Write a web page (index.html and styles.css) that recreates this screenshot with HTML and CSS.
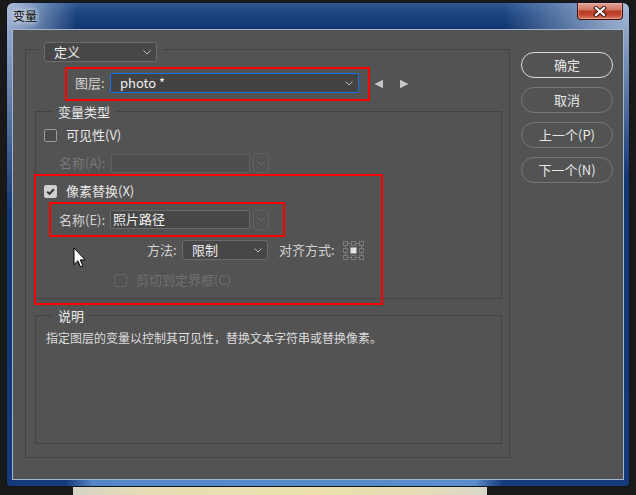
FILE: index.html
```html
<!DOCTYPE html>
<html lang="zh-CN">
<head>
<meta charset="utf-8">
<title>变量</title>
<link rel="stylesheet" href="styles.css">
</head>
<body>
<div class="desktop">
  <div class="window">
    <div class="titlebar">
      <span class="title">变量</span>
      <div class="close">
        <svg width="14" height="11" viewBox="0 0 14 11">
          <path d="M3 2 L11 9 M11 2 L3 9" stroke="#3a1a16" stroke-width="4.2" stroke-linecap="square" fill="none"/>
          <path d="M3 2 L11 9 M11 2 L3 9" stroke="#ffffff" stroke-width="2.2" stroke-linecap="square" fill="none"/>
        </svg>
      </div>
    </div>
    <div class="client">
      <div class="outer-group">
        <div class="legend-select">
          <div class="select sel-def"><span>定义</span>
            <svg class="chev" width="8" height="5" viewBox="0 0 8 5"><polyline points="0.5,0.5 4,4 7.5,0.5" fill="none" stroke="#bdbdbd" stroke-width="1"/></svg>
          </div>
        </div>
        <div class="layer-row">
          <div class="layer-mark">
            <span class="label lbl-layer">图层:</span>
            <div class="select sel-layer"><span>photo *</span>
              <svg class="chev" width="8" height="5" viewBox="0 0 8 5"><polyline points="0.5,0.5 4,4 7.5,0.5" fill="none" stroke="#bdbdbd" stroke-width="1"/></svg>
            </div>
          </div>
          <svg class="arrow prev" width="10" height="10" viewBox="0 0 10 10"><path d="M0.5 5 L9 0.8 L9 9.2 Z" fill="#c6c6c6"/></svg>
          <svg class="arrow next" width="10" height="10" viewBox="0 0 10 10"><path d="M9.5 5 L1 0.8 L1 9.2 Z" fill="#c6c6c6"/></svg>
        </div>

        <div class="group type-group">
          <div class="legend">变量类型</div>
          <div class="row row-vis">
            <span class="cb"></span><span class="text">可见性(V)</span>
          </div>
          <div class="row row-name-a">
            <span class="label lbl-name-a dis">名称(A):</span>
            <span class="input input-dis"></span>
            <span class="mini">
              <svg width="8" height="5" viewBox="0 0 8 5"><polyline points="0.5,0.5 4,4 7.5,0.5" fill="none" stroke="#6a6a6a" stroke-width="1"/></svg>
            </span>
          </div>
          <div class="row row-pix">
            <span class="cb checked">
              <svg width="11" height="11" viewBox="0 0 11 11"><path d="M2.2 5.6 L4.5 7.9 L8.9 3.3" fill="none" stroke="#333" stroke-width="2"/></svg>
            </span>
            <span class="text">像素替换(X)</span>
          </div>
          <div class="name-mark">
            <span class="label lbl-name-e">名称(E):</span>
            <span class="input">照片路径</span>
            <span class="mini">
              <svg width="8" height="5" viewBox="0 0 8 5"><polyline points="0.5,0.5 4,4 7.5,0.5" fill="none" stroke="#6a6a6a" stroke-width="1"/></svg>
            </span>
          </div>
          <div class="row row-method">
            <span class="label lbl-method">方法:</span>
            <div class="select sel-method"><span>限制</span>
              <svg class="chev" width="8" height="5" viewBox="0 0 8 5"><polyline points="0.5,0.5 4,4 7.5,0.5" fill="none" stroke="#bdbdbd" stroke-width="1"/></svg>
            </div>
            <span class="label lbl-align">对齐方式:</span>
            <svg class="align-icon" width="21" height="19" viewBox="0 0 21 19">
              <g fill="none" stroke="#7a7a7a" stroke-width="1">
                <rect x="0.5" y="0.5" width="4" height="4"/>
                <rect x="8.5" y="0.5" width="4" height="4"/>
                <rect x="16.5" y="0.5" width="4" height="4"/>
                <rect x="0.5" y="7.5" width="4" height="4"/>
                <rect x="16.5" y="7.5" width="4" height="4"/>
                <rect x="0.5" y="14.5" width="4" height="4"/>
                <rect x="8.5" y="14.5" width="4" height="4"/>
                <rect x="16.5" y="14.5" width="4" height="4"/>
                <path d="M4.5 2.5 H8.5 M12.5 2.5 H16.5 M4.5 16.5 H8.5 M12.5 16.5 H16.5 M2.5 4.5 V7.5 M2.5 11.5 V14.5 M18.5 4.5 V7.5 M18.5 11.5 V14.5"/>
              </g>
              <rect x="7.5" y="6.5" width="6" height="6" fill="#e6e6e6"/>
            </svg>
          </div>
          <div class="row row-clip">
            <span class="cb disabled"></span><span class="text dis">剪切到定界框(C)</span>
          </div>
        </div>

        <div class="group desc-group">
          <div class="legend">说明</div>
          <p class="desc">指定图层的变量以控制其可见性，替换文本字符串或替换像素。</p>
        </div>
      </div>

      <div class="buttons">
        <div class="btn default">确定</div>
        <div class="btn">取消</div>
        <div class="btn">上一个(P)</div>
        <div class="btn">下一个(N)</div>
      </div>

      <div class="pix-mark"></div>
      <svg class="cursor" width="13" height="21" viewBox="0 0 13 21">
        <path d="M1 1 L1 17.5 L4.9 13.8 L7.5 19.8 L9.8 18.8 L7.3 12.9 L12.3 12.9 Z" fill="#ffffff" stroke="#000000" stroke-width="1" stroke-linejoin="miter"/>
      </svg>
    </div>
  </div>
  <div class="photo"></div>
</div>
</body>
</html>
```

FILE: styles.css
```css
* { box-sizing: border-box; }
html, body { margin: 0; padding: 0; }
body {
  width: 636px;
  height: 495px;
  overflow: hidden;
  background: #191919;
  font-family: "Noto Sans CJK SC", "Noto Sans", sans-serif;
}
.desktop { padding: 3px 0 0 7px; }

.window {
  width: 622px;
  height: 483px;
  border-radius: 6px 6px 4px 4px;
  display: flex;
  flex-direction: column;
  background:
    linear-gradient(to right, rgba(90,140,205,0) 58px, rgba(88,138,204,0.95) 86px, rgba(95,145,208,0.95) 468px, rgba(90,140,205,0) 496px) left bottom / 100% 6px no-repeat,
    radial-gradient(ellipse 70px 210px at 0 0, rgba(176,194,222,0.95), rgba(176,194,222,0)),
    radial-gradient(ellipse 125px 175px at 100% 0, rgba(176,194,222,0.95), rgba(176,194,222,0)),
    linear-gradient(to bottom, #2f5892 0, #1d4682 10px, #12366f 26px, #15397a 100%);
  box-shadow: 0 0 0 1px rgba(10,20,40,0.6);
}

.titlebar {
  height: 26px;
  display: flex;
  align-items: center;
  padding-left: 6px;
}
.title {
  font-size: 12px;
  line-height: 16px;
  color: #000;
  text-shadow: 0 0 4px #fff, 0 0 8px rgba(255,255,255,0.8);
}
.close {
  align-self: flex-start;
  margin-left: auto;
  margin-right: 6px;
  width: 46px;
  height: 17px;
  border: 1px solid #3b1410;
  border-top: none;
  border-radius: 0 0 4px 4px;
  background: linear-gradient(#e4a597 0, #d47a69 40%, #b83a25 52%, #c24630 75%, #df8168 100%);
  box-shadow: inset 0 0 0 1px rgba(255,200,190,0.4);
  display: flex;
  align-items: center;
  justify-content: center;
}

.client {
  position: relative;
  margin: 0 5px;
  height: 451px;
  border: 1px solid #a3b5cf;
  background: #535353;
  display: flex;
  align-items: flex-start;
  padding: 19px 0 0 12px;
}

.outer-group {
  width: 485px;
  height: 409px;
  border: 1px solid #434343;
  display: flex;
  flex-direction: column;
  align-items: flex-start;
}
.legend-select {
  margin: -8px 0 0 12px;
  padding: 0 6px;
  background: #535353;
}
.select {
  display: flex;
  align-items: center;
  justify-content: space-between;
  height: 20px;
  border: 1px solid #6b6b6b;
  border-radius: 3px;
  background: #474747;
  color: #f0f0f0;
  font-size: 13px;
  line-height: 16px;
  padding: 0 5px 0 9px;
  white-space: nowrap;
}
.sel-def { width: 113px; }

.layer-row {
  margin: 5px 0 0 39px;
  display: flex;
  align-items: center;
}
.layer-mark {
  width: 305px;
  height: 34px;
  border: 2px solid #ff0000;
  display: flex;
  align-items: center;
  padding: 0 0 2px 8px;
}
.label {
  font-size: 13px;
  line-height: 16px;
  color: #d2d2d2;
  white-space: nowrap;
}
.lbl-layer { width: 35px; }
.sel-layer {
  width: 249px;
  border-color: #1473e6;
  border-radius: 2px;
  background: #434343;
}
.arrow.prev { margin-left: 4px; }
.arrow.next { margin-left: 15px; }

.group {
  margin-left: 9px;
  width: 467px;
  border: 1px solid #434343;
  display: flex;
  flex-direction: column;
  align-items: flex-start;
}
.type-group { margin-top: 10px; padding-bottom: 8px; }
.legend {
  margin: -8px 0 0 16px;
  padding: 0 6px;
  background: #535353;
  color: #ececec;
  font-size: 13px;
  line-height: 16px;
}

.row {
  display: flex;
  align-items: center;
  height: 20px;
  font-size: 13px;
}
.cb {
  width: 13px;
  height: 13px;
  border: 1px solid #9c9c9c;
  border-radius: 2px;
  background: #4b4b4b;
  display: flex;
}
.cb.checked { background: #d0d0d0; border-color: #d0d0d0; }
.cb.disabled { border-color: #666666; background: #535353; }
.text {
  margin-left: 9px;
  color: #e8e8e8;
  line-height: 16px;
  white-space: nowrap;
}
.dis { color: #777777; }
.text.dis { color: #6f6f6f; }

.row-vis { margin: 5px 0 0 8px; }
.row-name-a { margin: 8px 0 0 23px; }
.lbl-name-a { width: 52px; }
.input {
  width: 140px;
  height: 19px;
  border: 1px solid #6a6a6a;
  border-radius: 1px;
  background: #474747;
  color: #f2f2f2;
  font-size: 13px;
  line-height: 16px;
  padding-left: 2px;
  white-space: nowrap;
}
.input-dis {
  width: 139px;
  border-color: #606060;
  background: #4e4e4e;
}
.mini {
  width: 16px;
  height: 20px;
  margin-left: 3px;
  border: 1px solid #606060;
  border-radius: 3px;
  display: flex;
  align-items: center;
  justify-content: center;
}

.row-pix { margin: 8px 0 0 8px; }
.name-mark {
  margin: 1px 0 0 13px;
  width: 236px;
  height: 35px;
  border: 2px solid #ff0000;
  display: flex;
  align-items: center;
  padding-left: 8px;
}
.lbl-name-e { width: 51px; }

.row-method { margin: 3px 0 0 111px; }
.lbl-method { width: 35px; }
.sel-method { width: 86px; }
.lbl-align { margin-left: 11px; width: 64px; }

.row-clip { margin: 10px 0 0 78px; }

.desc-group { margin-top: 16px; height: 129px; }
.desc {
  margin: 6px 0 0 10px;
  font-size: 12px;
  line-height: 16px;
  color: #dcdcdc;
  white-space: nowrap;
}

.buttons {
  margin: 3px 0 0 11px;
  display: flex;
  flex-direction: column;
  gap: 9px;
}
.btn {
  width: 92px;
  height: 26px;
  border: 1px solid #777777;
  border-radius: 13px;
  display: flex;
  align-items: center;
  justify-content: center;
  font-size: 13px;
  line-height: 16px;
  color: #e8e8e8;
}
.btn.default { border-color: #dcdcdc; }

.pix-mark {
  position: absolute;
  left: 21px;
  top: 144px;
  width: 349px;
  height: 131px;
  border: 2px solid #ff0000;
}
.cursor {
  position: absolute;
  left: 60px;
  top: 217px;
}

.photo {
  margin: 1px 0 0 66px;
  width: 414px;
  height: 9px;
  background: linear-gradient(to right, #d5d2c4 0, #e8deb4 18%, #ecdfad 60%, #e6dcb6 85%, #d8d6ca 100%);
}
```
